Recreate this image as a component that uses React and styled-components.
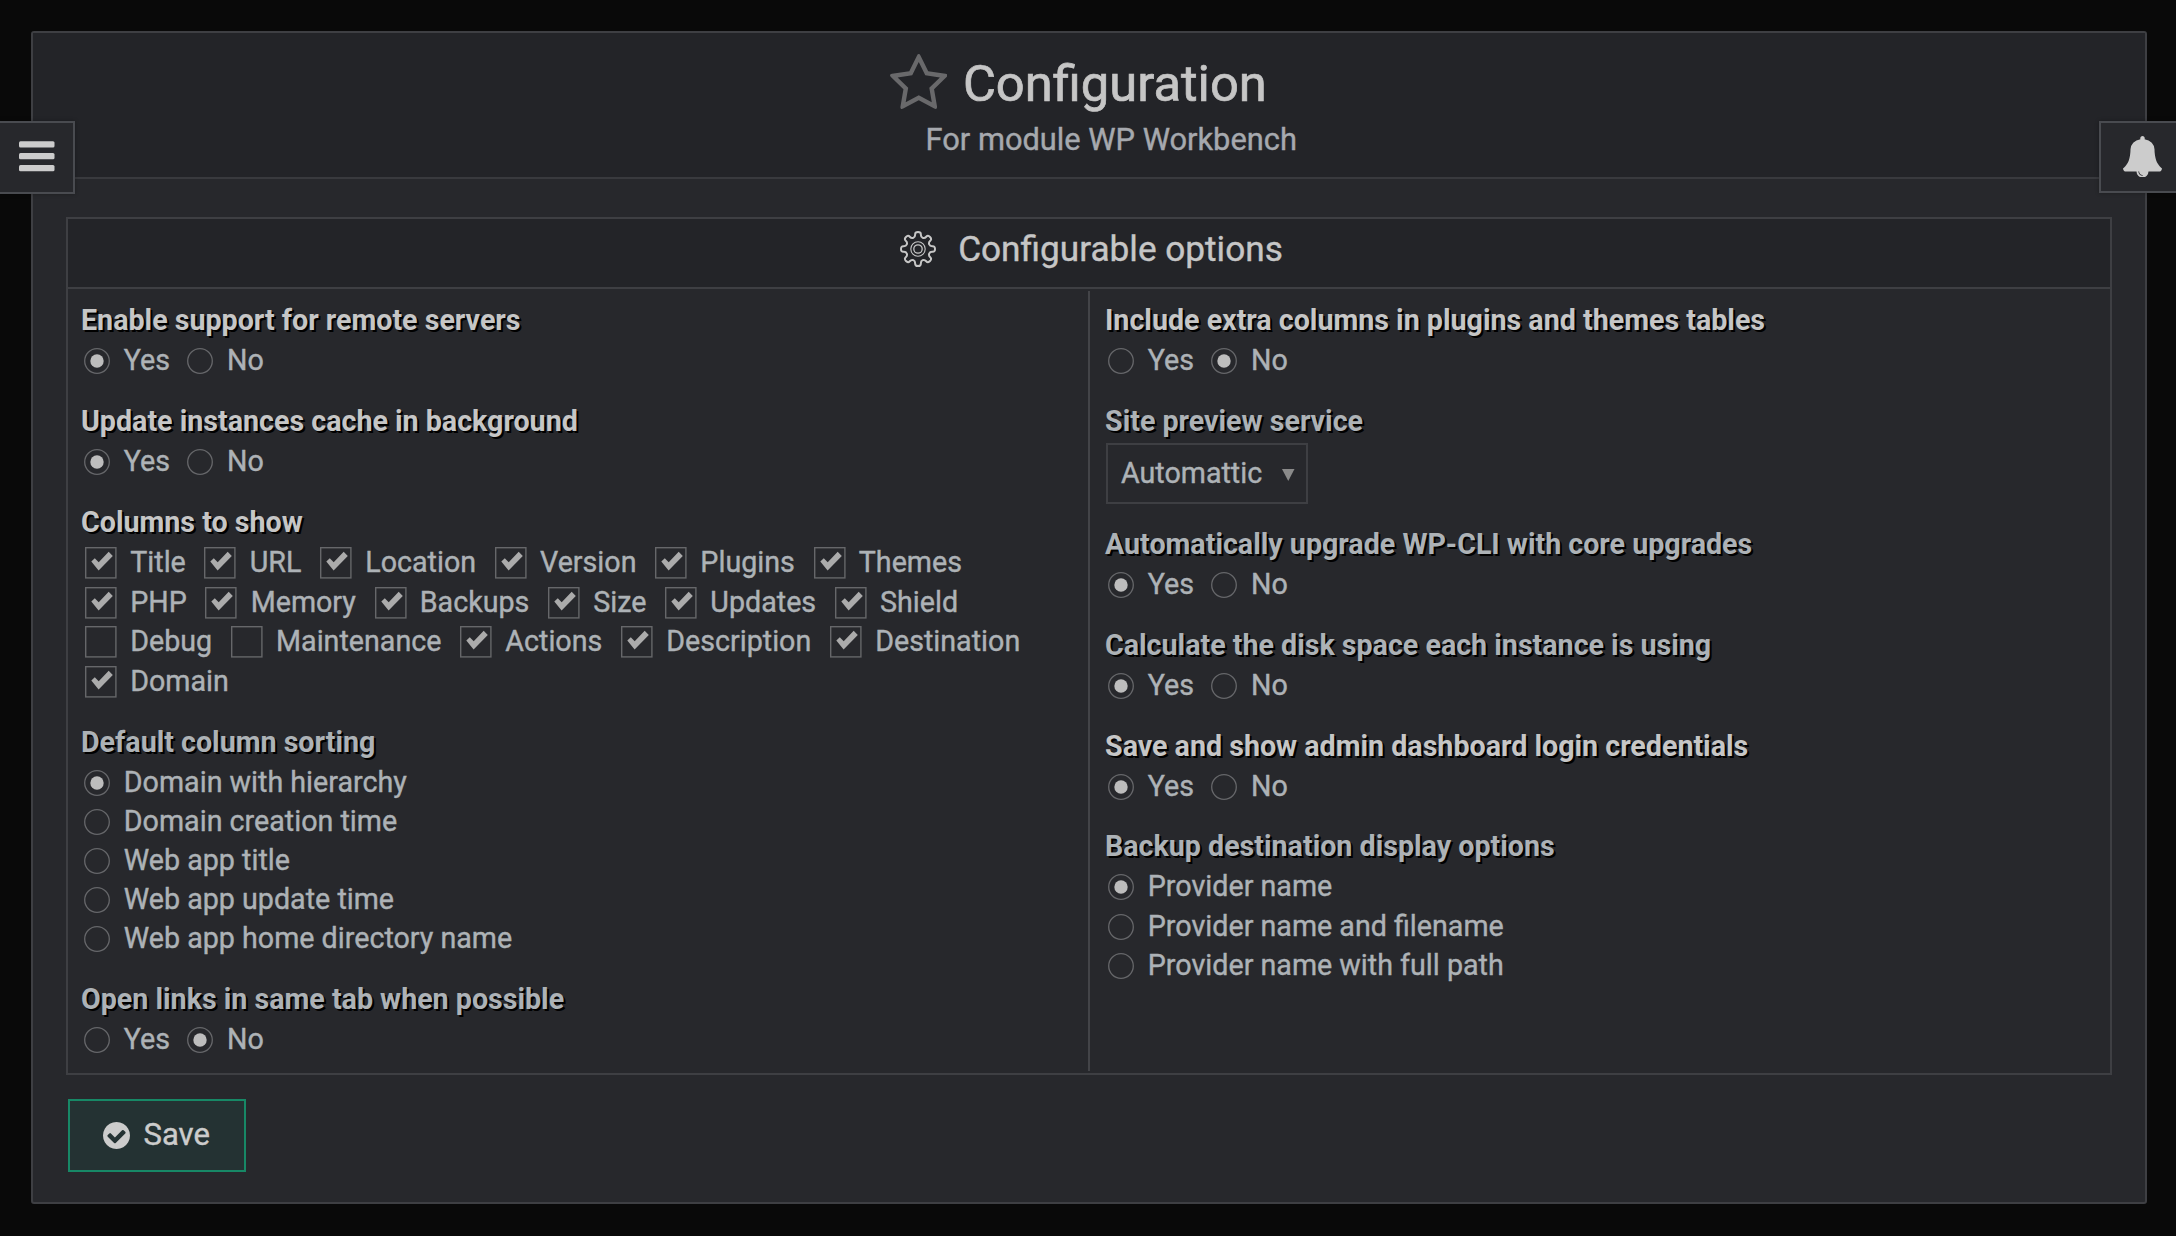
import React from "react";
import styled, { createGlobalStyle } from "styled-components";

const color = {
  page: "#090909",
  panel: "#27282c",
  head: "#232428",
  line: "#3e3f43",
  tabLine: "#494b50",
  text: "#adb2b6",
  strong: "#c6c6c6",
  icon: "#cccccc",
  control: "#66676a",
};

const GlobalStyle = createGlobalStyle`
  * { box-sizing: border-box; }
  body {
    margin: 0;
    background: ${color.page};
    color: ${color.text};
    font-family: Roboto, "Liberation Sans", sans-serif;
    font-size: 28.67px;
    -webkit-text-stroke: 0.4px currentColor;
  }
`;

const Page = styled.div`
  min-height: 1236px;
  padding: 31px 29px 0 31px;
`;

const Panel = styled.main`
  height: 1173px;
  border: 2px solid ${color.line};
  border-radius: 3px;
  background: ${color.panel};
`;

const PanelHeader = styled.header`
  display: flex;
  flex-direction: column;
  align-items: center;
  height: 146px;
  padding-top: 17px;
  border-bottom: 2px solid #393a3e;
  background: ${color.head};
`;

const TitleRow = styled.div`
  display: flex;
  align-items: center;
  height: 62px;
  margin-right: 21.2px;
  gap: 15.4px;
`;

const Title = styled.h1`
  margin: 6px 0 0;
  font-size: 50.7px;
  line-height: 60px;
  font-weight: 400;
  color: ${color.strong};
  -webkit-text-stroke-width: 0.7px;
`;

const Subtitle = styled.p`
  margin: 8px 0 0 44.4px;
  font-size: 30.8px;
  line-height: 40px;
  color: #a6a9ae;
`;

const PanelBody = styled.div`
  padding: 38px 33px 0;
`;

const Box = styled.section`
  height: 858px;
  border: 2px solid ${color.line};
`;

const BoxHeader = styled.header`
  display: flex;
  align-items: center;
  justify-content: center;
  gap: 22px;
  height: 70px;
  padding: 0 0 9px 5px;
  border-bottom: 2px solid ${color.line};
  background: ${color.head};
`;

const BoxTitle = styled.h2`
  margin: 0;
  font-size: 35.2px;
  line-height: 44px;
  font-weight: 400;
  color: ${color.strong};
`;

const Columns = styled.div`
  display: grid;
  grid-template-columns: 1022px 1fr;
  grid-template-rows: minmax(0, 1fr);
  height: 784px;
  padding: 2px 0;
`;

const Column = styled.div`
  padding: 9px 13px 0 ${(p) => (p.$divided ? 15 : 13)}px;
  ${(p) => !p.$divided && `border-right: 2px solid #434448;`}
`;

const Group = styled.fieldset`
  margin: 0 0 ${(p) => p.$gap ?? 22}px;
  padding: 0;
  border: 0;
  min-width: 0;
`;

const GroupTitle = styled.legend`
  display: block;
  padding: 0;
  height: 40px;
  font-size: 28.64px;
  line-height: 40px;
  font-weight: 700;
  -webkit-text-stroke: 0;
  color: ${(p) => (p.$strong ? color.strong : color.text)};
  text-shadow: 2px 2px 0 #000;
  white-space: nowrap;
`;

const Options = styled.div`
  display: flex;
  flex-direction: ${(p) => (p.$stacked ? "column" : "row")};
  gap: ${(p) => (p.$stacked ? 0 : "17.2px")};
  padding: ${(p) => p.$lead ?? 0}px 0 0 3px;
`;

const CheckRow = styled.div`
  display: flex;
  gap: 18.7px;
  padding-left: 4px;
`;

const Option = styled.label`
  display: flex;
  align-items: center;
  gap: ${(p) => p.$gap}px;
  height: ${(p) => p.$height}px;
  white-space: nowrap;

  svg {
    flex: none;
    margin-top: 2px;
  }
`;

const Select = styled.div`
  display: flex;
  align-items: center;
  justify-content: space-between;
  width: 202px;
  height: 61px;
  margin: 2px 0 0 1px;
  padding: 0 11.5px 1px 13px;
  border: 2px solid ${color.line};

  svg {
    margin-top: 4px;
  }
`;

const SaveButton = styled.button`
  display: flex;
  align-items: center;
  gap: 13.2px;
  width: 178px;
  height: 73px;
  margin: 24px 0 0 2px;
  padding: 0 0 2px 33.4px;
  border: 2px solid #178866;
  background: #243233;
  color: ${color.icon};
  font: inherit;
  font-size: 31px;
  -webkit-text-stroke: inherit;

  svg {
    margin-top: 1.5px;
  }
`;

const EdgeTab = styled.button`
  position: absolute;
  top: 121px;
  ${(p) => p.$side}: -2px;
  display: flex;
  align-items: center;
  width: ${(p) => (p.$side === "left" ? 77 : 79)}px;
  height: ${(p) => (p.$side === "left" ? 73 : 72)}px;
  padding: 0 0 ${(p) => (p.$side === "left" ? "2px 19px" : "1px 22px")};
  border: 2px solid ${color.tabLine};
  background: ${color.panel};
  box-shadow: 0 0 4px rgba(0, 0, 0, 0.3);
  color: ${color.icon};
`;

const StarIcon = () => (
  <svg width="57.5" height="55" viewBox="0 32 1664 1587" fill="#69696b">
    <path d="M1137 1004l306-297-422-62-189-382-189 382-422 62 306 297-73 421 378-199 377 199zm527-357q0 22-26 48l-363 354 86 500q1 7 1 20 0 50-41 50-19 0-40-12l-449-236-449 236q-22 12-40 12-21 0-31.5-14.5t-10.5-35.5q0-6 2-20l86-500-364-354q-25-27-25-48 0-37 56-46l502-73 225-455q19-41 49-41t49 41l225 455 502 73q56 9 56 46z" />
  </svg>
);

const BellIcon = () => (
  <svg width="39" height="41.5" viewBox="64 0 1664 1792" fill="currentColor" preserveAspectRatio="none">
    <path d="M912 1696q0-16-16-16-59 0-101.5-42.5t-42.5-101.5q0-16-16-16t-16 16q0 73 51.5 124.5t124.5 51.5q16 0 16-16zm816-288q0 52-38 90t-90 38h-448q0 106-75 181t-181 75-181-75-75-181h-448q-52 0-90-38t-38-90q50-42 91-88t85-119.5 74.5-158.5 50-206 19.5-260q0-152 117-282.5t307-158.5q-8-19-8-39 0-40 28-68t68-28 68 28 28 68q0 20-8 39 190 28 307 158.5t117 282.5q0 139 19.5 260t50 206 74.5 158.5 85 119.5 91 88z" />
  </svg>
);

const MenuIcon = () => (
  <svg width="36" height="31" viewBox="0 0 36 31" fill="currentColor">
    <rect x="0" y="0.2" width="35.5" height="6.3" rx="1.5" />
    <rect x="0" y="12" width="35.5" height="6.3" rx="1.5" />
    <rect x="0" y="23.9" width="35.5" height="6.3" rx="1.5" />
  </svg>
);

const CheckCircleIcon = () => (
  <svg width="27" height="27" viewBox="128 128 1536 1536" fill="currentColor">
    <path d="M1412 734q0-28-18-46l-91-90q-19-19-45-19t-45 19l-408 407-226-226q-19-19-45-19t-45 19l-91 90q-18 18-18 46 0 27 18 45l362 362q19 19 45 19 27 0 46-19l543-543q18-18 18-45zm252 162q0 209-103 385.5t-279.5 279.5-385.5 103-385.5-103-279.5-279.5-103-385.5 103-385.5 279.5-279.5 385.5-103 385.5 103 279.5 279.5 103 385.5z" />
  </svg>
);

/* Eight-toothed outline: one tooth's corners are rotated round the hub and the
   corners are rounded by quadratic curves through the edge midpoints. */
function gearPath() {
  const tooth = [
    [-2.7, -12],
    [-3, -17],
    [3, -17],
    [2.7, -12],
  ];
  const pts = [];
  for (let i = 0; i < 8; i++) {
    const a = (i * Math.PI) / 4;
    tooth.forEach(([x, y]) =>
      pts.push([x * Math.cos(a) - y * Math.sin(a), x * Math.sin(a) + y * Math.cos(a)])
    );
  }
  const f = (p) => p.map((n) => n.toFixed(2)).join(" ");
  const mid = (p, q) => [(p[0] + q[0]) / 2, (p[1] + q[1]) / 2];
  const n = pts.length;
  let d = "M" + f(mid(pts[n - 1], pts[0]));
  pts.forEach((p, i) => {
    d += "Q" + f(p) + " " + f(mid(p, pts[(i + 1) % n]));
  });
  return d + "Z";
}

const GearIcon = () => (
  <svg width="36" height="36" viewBox="-18 -18 36 36" fill="none" stroke={color.strong}>
    <path d={gearPath()} strokeWidth="2" strokeLinejoin="round" />
    <circle r="7.2" strokeWidth="1.1" />
    <circle r="4.2" strokeWidth="1.3" />
  </svg>
);

const Radio = ({ checked }) => (
  <svg width="26" height="26" viewBox="0 0 26 26">
    <circle cx="13" cy="13" r="12.3" fill="none" stroke={color.control} strokeWidth="1.3" />
    {checked && <circle cx="13" cy="13" r="6.7" fill="#bdbdbd" />}
  </svg>
);

const Checkbox = ({ checked }) => (
  <svg width="32" height="32" viewBox="0 0 32 32">
    <rect x="0.7" y="0.7" width="30.2" height="30.2" fill="none" stroke={color.control} strokeWidth="1.4" />
    {checked && <path d="M6.3 14.5L9.8 11.3L13.7 15.2L23.7 4.8L27.8 9L13.6 23.4Z" fill="#ababab" />}
  </svg>
);

function RadioGroup({ title, strong, options = ["Yes", "No"], selected = 0, stacked, height = 39, gap, lead }) {
  return (
    <Group $gap={gap}>
      <GroupTitle $strong={strong}>{title}</GroupTitle>
      <Options $stacked={stacked} $lead={lead}>
        {options.map((label, i) => (
          <Option key={label} $gap={13.8} $height={height}>
            <Radio checked={i === selected} />
            {label}
          </Option>
        ))}
      </Options>
    </Group>
  );
}

const columnRows = [
  { height: 40, labels: ["Title", "URL", "Location", "Version", "Plugins", "Themes"] },
  { height: 40, labels: ["PHP", "Memory", "Backups", "Size", "Updates", "Shield"] },
  { height: 38.2, labels: ["Debug", "Maintenance", "Actions", "Description", "Destination"] },
  { height: 41, labels: ["Domain"] },
];
const hidden = new Set(["Debug", "Maintenance"]);

const sortings = [
  "Domain with hierarchy",
  "Domain creation time",
  "Web app title",
  "Web app update time",
  "Web app home directory name",
];

const destinations = ["Provider name", "Provider name and filename", "Provider name with full path"];

export default function App() {
  return (
    <>
      <GlobalStyle />
      <Page>
        <Panel>
          <PanelHeader>
            <TitleRow>
              <StarIcon />
              <Title>Configuration</Title>
            </TitleRow>
            <Subtitle>For module WP Workbench</Subtitle>
          </PanelHeader>
          <PanelBody>
            <Box>
              <BoxHeader>
                <GearIcon />
                <BoxTitle>Configurable options</BoxTitle>
              </BoxHeader>
              <Columns>
                <Column>
                  <RadioGroup title="Enable support for remote servers" strong />
                  <RadioGroup title="Update instances cache in background" strong />
                  <Group $gap={20.8}>
                    <GroupTitle $strong>Columns to show</GroupTitle>
                    {columnRows.map((row) => (
                      <CheckRow key={row.labels[0]}>
                        {row.labels.map((label) => (
                          <Option key={label} $gap={13.2} $height={row.height}>
                            <Checkbox checked={!hidden.has(label)} />
                            {label}
                          </Option>
                        ))}
                      </CheckRow>
                    ))}
                  </Group>
                  <RadioGroup title="Default column sorting" options={sortings} stacked lead={0.5} gap={21.5} />
                  <RadioGroup title="Open links in same tab when possible" selected={1} lead={0.5} />
                </Column>
                <Column $divided>
                  <RadioGroup title="Include extra columns in plugins and themes tables" strong selected={1} />
                  <Group $gap={20}>
                    <GroupTitle>Site preview service</GroupTitle>
                    <Select>
                      Automattic
                      <svg width="13" height="12" viewBox="0 0 13 12">
                        <path d="M0 0H12.5L6.25 12Z" fill="#8a8a8a" />
                      </svg>
                    </Select>
                  </Group>
                  <RadioGroup title="Automatically upgrade WP-CLI with core upgrades" />
                  <RadioGroup title="Calculate the disk space each instance is using" />
                  <RadioGroup title="Save and show admin dashboard login credentials" strong gap={21.2} />
                  <RadioGroup title="Backup destination display options" options={destinations} stacked height={39.7} />
                </Column>
              </Columns>
            </Box>
            <SaveButton>
              <CheckCircleIcon />
              Save
            </SaveButton>
          </PanelBody>
        </Panel>
      </Page>
      <EdgeTab $side="left" aria-label="Menu">
        <MenuIcon />
      </EdgeTab>
      <EdgeTab $side="right" aria-label="Notifications">
        <BellIcon />
      </EdgeTab>
    </>
  );
}
